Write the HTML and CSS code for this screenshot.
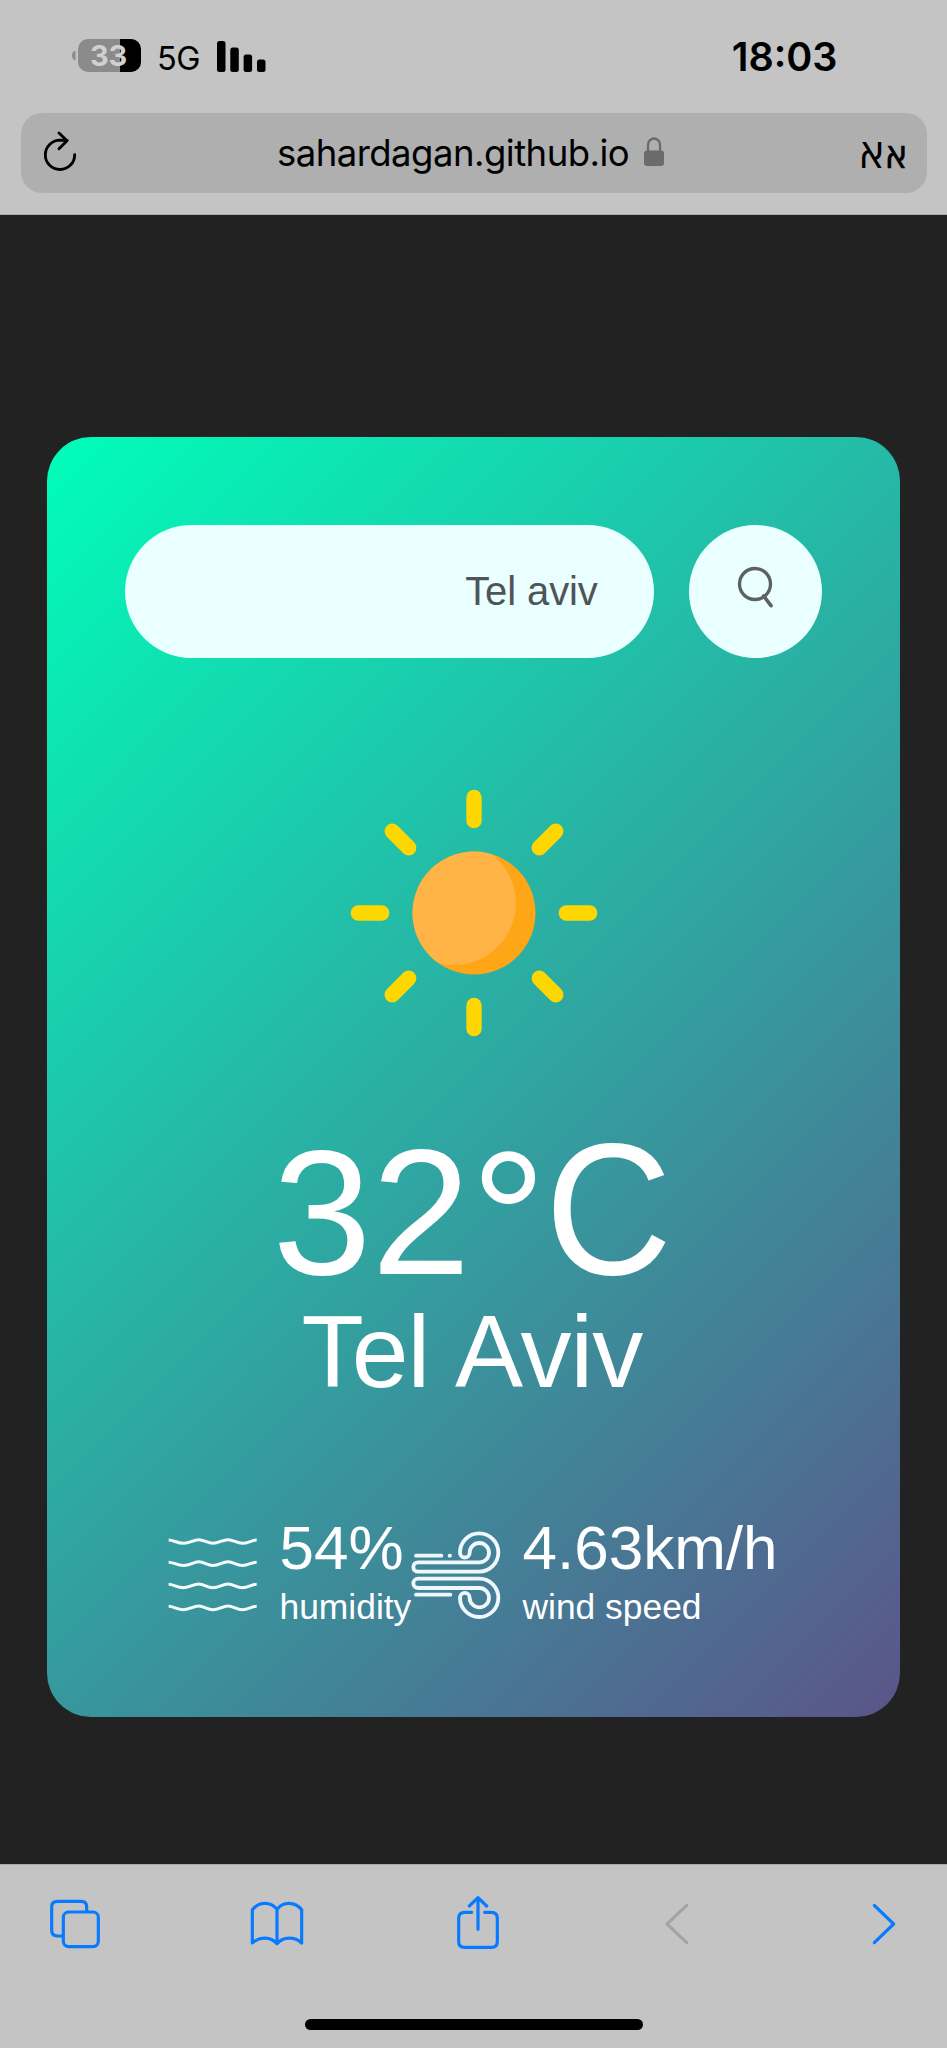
FILE: index.html
```html
<!DOCTYPE html>
<html lang="en">
<head>
<meta charset="utf-8">
<title>Weather</title>
<link rel="stylesheet" href="styles.css">
</head>
<body>
<header class="browser-top">
  <div class="status">
    <div class="status-left">
      <svg class="battery" width="69" height="34" viewBox="0 0 69 34">
        <path d="M3.5 12.500v10C1.200 21.800 0 20 0 17.500s1.200-4.300 3.500-5z" fill="#8b8b8b"/>
        <rect x="6" y="1" width="63" height="33" rx="10" fill="#8b8b8b"/>
        <path d="M48 1h11a10 10 0 0 1 10 10v13a10 10 0 0 1-10 10H48z" fill="#000"/>
        <text class="battery-level" x="18" y="28">33</text>
      </svg>
      <span class="network">5G</span>
      <svg class="signal" width="49" height="31" viewBox="0 0 49 31">
        <rect x="0" y="0" width="8.500" height="31" rx="2.500"/>
        <rect x="13.300" y="6.500" width="8.500" height="24.500" rx="2.500"/>
        <rect x="26.600" y="13.500" width="8.500" height="17.500" rx="2.500"/>
        <rect x="40" y="18.500" width="8.500" height="12.500" rx="2.500"/>
      </svg>
    </div>
    <span class="time">18:03</span>
  </div>
  <div class="address">
    <svg class="reload" width="36" height="42" viewBox="126 390 108 126" fill="none" stroke="#000" stroke-width="8.500" stroke-linecap="round" stroke-linejoin="round">
      <path d="M224 464A44 44 0 1 1 180 420.500L202 421M177 399L201 422L177 446"/>
    </svg>
    <div class="site">
      <span class="url">sahardagan.github.io</span>
      <svg class="lock" width="20" height="30" viewBox="0 0 20 30">
        <rect x="0" y="13.500" width="20" height="15.500" rx="3" fill="#6b6b6e"/>
        <path d="M4 14.500V8a6 6.500 0 0 1 12 0v6.500" fill="none" stroke="#6b6b6e" stroke-width="2.300"/>
      </svg>
    </div>
    <div class="text-size"><span class="aleph-big">א</span><span class="aleph-small">א</span></div>
  </div>
</header>

<main class="page">
  <section class="card">
    <div class="search">
      <div class="search-input">Tel aviv</div>
      <div class="search-button">
        <svg width="36" height="42" viewBox="831 438 108 126" fill="none" stroke="#5d6164" stroke-width="10">
          <circle cx="885" cy="492" r="46.500"/>
          <path d="M911 528L933 557" stroke-linecap="round" stroke-width="11"/>
        </svg>
      </div>
    </div>
    <svg class="sun" width="250" height="250" viewBox="-375 -375 750 750">
      <defs><clipPath id="disc"><circle r="184.500"/></clipPath></defs>
      <circle r="184.500" fill="#ffa616"/>
      <circle cx="-60" cy="-30" r="185.500" fill="#ffb445" clip-path="url(#disc)"/>
      <g stroke="#ffd700" stroke-width="46" stroke-linecap="round">
        <path d="M0-347V-277M0 277V347M-347 0H-277M277 0H347"/>
        <path transform="rotate(45)" d="M0-347V-277M0 277V347M-347 0H-277M277 0H347"/>
      </g>
    </svg>
    <h1 class="temp">32<span class="degree">°</span><span class="unit">C</span></h1>
    <h2 class="city">Tel Aviv</h2>
    <div class="details">
      <div class="detail humidity">
        <svg class="detail-icon" width="90" height="90" viewBox="55 90 270 270" fill="none" stroke="#f4fbff" stroke-width="9">
          <path id="wave" d="M57 120C72 120 82 130 102 130S130 119 147 119S172 130 190 130S218 119 235 119S260 130 278 130S306 120 321 120"/>
          <use href="#wave" y="66.500"/>
          <use href="#wave" y="133"/>
          <use href="#wave" y="199"/>
        </svg>
        <div><p class="value">54%</p><p class="label">humidity</p></div>
      </div>
      <div class="detail">
        <svg class="detail-icon" width="90" height="90" viewBox="785 90 270 270" fill="none" stroke="#f0f8ff" stroke-width="11.500" stroke-linecap="round">
          <path d="M806 215H990A57.500 57.500 0 1 0 932 158A14.500 14.500 0 0 0 961 158A29 29 0 1 1 990 187H806A14 14 0 0 0 806 215ZM800 167H876M901 167H902"/>
          <path d="M806 236H990A57.500 57.500 0 1 1 932 293A14.500 14.500 0 0 1 961 293A29 29 0 1 0 990 264H806A14 14 0 0 1 806 236ZM800 284H903"/>
        </svg>
        <div><p class="value">4.63km/h</p><p class="label">wind speed</p></div>
      </div>
    </div>
  </section>
</main>

<footer class="browser-bottom">
  <nav class="toolbar">
    <svg class="tabs" width="50" height="54" viewBox="150 588 150 162">
      <path d="M186 708H172Q155 708 155 691V621Q155 604 172 604H244Q260 604 260 621V634"/>
      <rect x="190" y="636" width="105" height="104" rx="16"/>
    </svg>
    <svg class="book" width="54" height="54" viewBox="750 588 162 162">
      <path d="M831 628C813 604 777 604 757 629V729C778 709 812 709 831 731C850 709 884 709 905 729V629C885 604 849 604 831 628ZM831 628V731"/>
    </svg>
    <svg class="share" width="44" height="54" viewBox="1368 588 132 162">
      <path d="M1415 637H1394Q1376 637 1376 655V725Q1376 742 1394 742H1474Q1492 742 1492 725V655Q1492 637 1474 637H1454M1434 688V594M1408 618L1434 593L1460 618"/>
    </svg>
    <svg class="back" width="24" height="54" viewBox="576 588 72 162"><path d="M641 616L582 672L641 728"/></svg>
    <svg class="forward" width="24" height="54" viewBox="1197 588 72 162"><path d="M1204 616L1262 672L1204 728"/></svg>
  </nav>
  <div class="home-indicator"></div>
</footer>
</body>
</html>
```

FILE: styles.css
```css
* { box-sizing: border-box; margin: 0; padding: 0; }

body {
  width: 947px;
  height: 2048px;
  display: flex;
  flex-direction: column;
  background: #222;
  font-family: "Liberation Sans", Arial, sans-serif;
  overflow: hidden;
}

svg { display: block; flex: none; }

.browser-top {
  flex: none;
  height: 215px;
  padding: 0 20.500px;
  background: #c4c4c4;
  border-bottom: 1px solid #aaa;
  font-family: Inter, sans-serif;
  color: #000;
}

.status {
  height: 113px;
  padding: 38px 89px 0 51.500px;
  display: flex;
  justify-content: space-between;
  align-items: flex-start;
}

.status-left { display: flex; align-items: flex-start; }
.battery-level { font: 700 29px Inter, sans-serif; letter-spacing: -.3px; fill: #d0d0d0; }
.network {
  width: 60px;
  margin-left: 16px;
  font-size: 32.500px;
  line-height: 41px;
  letter-spacing: -.5px;
}
.signal { margin-top: 2.500px; }
.time { font-size: 39.500px; font-weight: 600; line-height: 39px; }

.address {
  height: 80px;
  padding: 0 20px 0 21.500px;
  display: flex;
  align-items: center;
  justify-content: space-between;
  background: #afafaf;
  border-radius: 21px;
}
.reload { margin-bottom: 4px; }
.site { display: flex; align-items: center; gap: 15px; margin-left: 3px; }
.url { width: 352px; font-size: 36.500px; line-height: 46px; letter-spacing: -.52px; white-space: nowrap; }
.lock { margin-bottom: 2px; }
.text-size { display: flex; align-items: baseline; gap: 2px; font-family: "Open Sans", "DejaVu Sans", sans-serif; }
.aleph-big { font-size: 41px; line-height: 50px; }
.aleph-small { font-size: 35px; line-height: 50px; -webkit-text-stroke: .6px #000; }

.page {
  flex: 1;
  padding: 221.500px 47px 0;
}

.card {
  height: 1280px;
  padding-top: 88.500px;
  display: flex;
  flex-direction: column;
  align-items: center;
  border-radius: 44px;
  background: linear-gradient(135deg, #00feba, #5b548a);
  color: #fff;
}

.search { display: flex; gap: 35.500px; }
.search-input {
  width: 529px;
  height: 133px;
  padding-right: 56px;
  border-radius: 67px;
  background: #eaffff;
  color: #4f5557;
  font-size: 40px;
  line-height: 132px;
  letter-spacing: -.1px;
  text-align: right;
}
.search-button {
  width: 133px;
  height: 133px;
  padding: 41px 0 0 48px;
  border-radius: 50%;
  background: #eaffff;
}

.sun { margin-top: 130px; }
.temp { height: 178px; margin: 85px 2px 0 0; font-size: 178px; font-weight: 400; line-height: 180px; letter-spacing: 0; }
.degree { font-size: 190px; line-height: 0; vertical-align: -10px; letter-spacing: -4px; }
.unit {
  display: inline-block;
  margin-left: -1px;
  font-size: 187px;
  line-height: 0;
  letter-spacing: -4px;
  transform: scaleX(.94);
}
.city { height: 102px; margin: 0 3px 0 0; font-size: 102px; font-weight: 400; line-height: 102px; letter-spacing: -.9px; word-spacing: 4px; }

.details {
  width: 100%;
  margin-top: 113.500px;
  padding-left: 121px;
  display: flex;
}
.detail { display: flex; gap: 21.500px; white-space: nowrap; }
.humidity { width: 243px; }
.detail-icon { margin-top: 13px; }
.value { font-size: 62px; line-height: 62px; }
.label { margin-top: 8.500px; font-size: 35.400px; line-height: 40px; }

.browser-bottom {
  flex: none;
  height: 184.500px;
  padding-top: 31px;
  background: #c4c4c4;
  border-top: 1px solid #aaa;
}
.toolbar { display: flex; padding-left: 50px; }
.toolbar svg { fill: none; stroke: #087aff; stroke-width: 9.500; stroke-linecap: round; stroke-linejoin: round; }
.book { margin-left: 150px; }
.share { margin-left: 152px; }
.toolbar .back { margin-left: 165px; stroke: #a4a4a4; }
.forward { margin-left: 183px; }
.home-indicator { width: 338px; height: 11px; margin: 69px 0 0 305px; border-radius: 6px; background: #000; }
```
